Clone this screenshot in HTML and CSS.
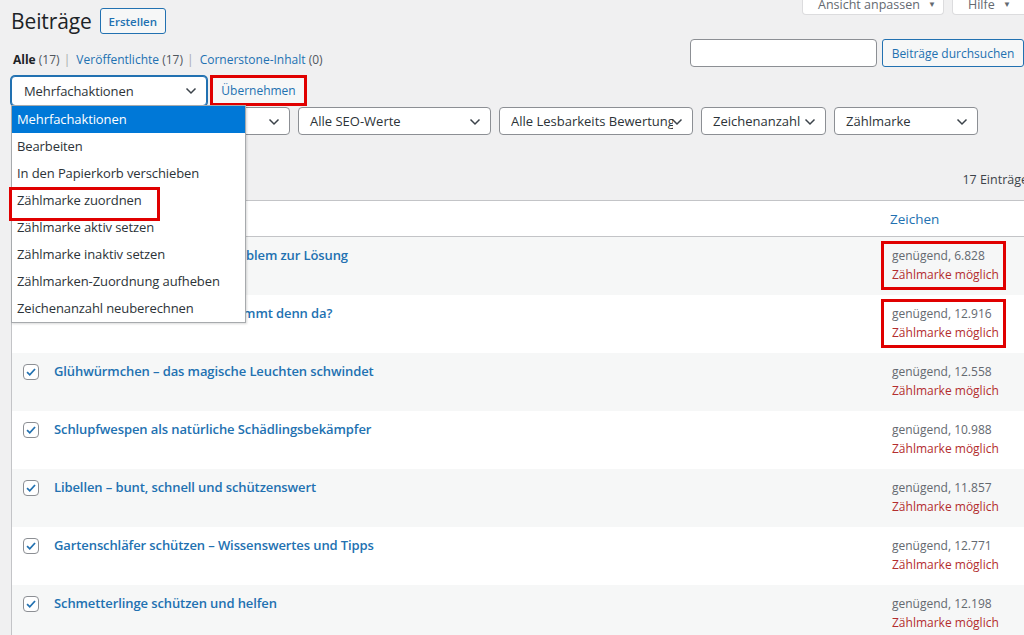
FILE: index.html
```html
<!DOCTYPE html>
<html lang="de">
<head>
<meta charset="utf-8">
<title>Beiträge</title>
<link rel="stylesheet" href="styles.css">
</head>
<body>
<div class="wrap">
  <div class="head-row">
    <div class="title-group">
      <h1 class="page-title">Beiträge</h1>
      <a class="btn btn-add">Erstellen</a>
    </div>
    <div class="meta-links">
      <span class="meta-btn meta-options">Ansicht anpassen <span class="tri">▼</span></span>
      <span class="meta-btn meta-help">Hilfe <span class="tri">▼</span></span>
    </div>
  </div>

  <div class="sub-row">
    <ul class="subsubsub">
      <li><b class="current">Alle</b> <span class="count">(17)</span> <span class="sep">|</span></li>
      <li><a>Veröffentlichte <span class="count-l">(17)</span></a> <span class="sep">|</span></li>
      <li><a>Cornerstone-Inhalt</a> <span class="count">(0)</span></li>
    </ul>
    <div class="search-box">
      <input class="search-input" type="text">
      <a class="btn btn-search">Beiträge durchsuchen</a>
    </div>
  </div>

  <div class="bulk-row">
    <div class="select select-bulk">Mehrfachaktionen
      <svg class="chev" viewBox="0 0 12 8"><path d="M1.5 1.5 L6 6 L10.5 1.5" fill="none" stroke="#3c434a" stroke-width="1.5"/></svg>
    </div>
    <span class="apply-wrap"><a class="btn btn-apply">Übernehmen</a></span>
  </div>

  <div class="filter-row">
    <div class="select f-cat">Alle Kategorien
      <svg class="chev" viewBox="0 0 12 8"><path d="M1.5 1.5 L6 6 L10.5 1.5" fill="none" stroke="#3c434a" stroke-width="1.5"/></svg>
    </div>
    <div class="select f-seo">Alle SEO-Werte
      <svg class="chev" viewBox="0 0 12 8"><path d="M1.5 1.5 L6 6 L10.5 1.5" fill="none" stroke="#3c434a" stroke-width="1.5"/></svg>
    </div>
    <div class="select f-read"><span class="clip">Alle Lesbarkeits Bewertungen</span>
      <svg class="chev" viewBox="0 0 12 8"><path d="M1.5 1.5 L6 6 L10.5 1.5" fill="none" stroke="#3c434a" stroke-width="1.5"/></svg>
    </div>
    <div class="select f-chars">Zeichenanzahl
      <svg class="chev" viewBox="0 0 12 8"><path d="M1.5 1.5 L6 6 L10.5 1.5" fill="none" stroke="#3c434a" stroke-width="1.5"/></svg>
    </div>
    <div class="select f-mark">Zählmarke
      <svg class="chev" viewBox="0 0 12 8"><path d="M1.5 1.5 L6 6 L10.5 1.5" fill="none" stroke="#3c434a" stroke-width="1.5"/></svg>
    </div>
  </div>

  <div class="nav-row">
    <span class="num-items">17 Einträge</span>
  </div>

  <div class="table">
    <div class="thead">
      <div class="c-cb"></div>
      <div class="c-title"></div>
      <div class="c-chars"><a>Zeichen</a></div>
    </div>
    <div class="row alt">
      <div class="c-cb"><span class="cb"><svg viewBox="0 0 16 16"><path d="M3.5 8.2 L6.6 11.2 L12.6 4.6" fill="none" stroke="#2271b1" stroke-width="2"/></svg></span></div>
      <div class="c-title"><a>Blattläuse im Garten – vom Problem zur Lösung</a></div>
      <div class="c-chars"><div class="vals boxed"><div class="v1">genügend, 6.828</div><div class="v2">Zählmarke möglich</div></div></div>
    </div>
    <div class="row">
      <div class="c-cb"><span class="cb"><svg viewBox="0 0 16 16"><path d="M3.5 8.2 L6.6 11.2 L12.6 4.6" fill="none" stroke="#2271b1" stroke-width="2"/></svg></span></div>
      <div class="c-title"><a>Wildbienen im Garten – wer summt denn da?</a></div>
      <div class="c-chars"><div class="vals boxed"><div class="v1">genügend, 12.916</div><div class="v2">Zählmarke möglich</div></div></div>
    </div>
    <div class="row alt">
      <div class="c-cb"><span class="cb"><svg viewBox="0 0 16 16"><path d="M3.5 8.2 L6.6 11.2 L12.6 4.6" fill="none" stroke="#2271b1" stroke-width="2"/></svg></span></div>
      <div class="c-title"><a>Glühwürmchen – das magische Leuchten schwindet</a></div>
      <div class="c-chars"><div class="vals"><div class="v1">genügend, 12.558</div><div class="v2">Zählmarke möglich</div></div></div>
    </div>
    <div class="row">
      <div class="c-cb"><span class="cb"><svg viewBox="0 0 16 16"><path d="M3.5 8.2 L6.6 11.2 L12.6 4.6" fill="none" stroke="#2271b1" stroke-width="2"/></svg></span></div>
      <div class="c-title"><a>Schlupfwespen als natürliche Schädlingsbekämpfer</a></div>
      <div class="c-chars"><div class="vals"><div class="v1">genügend, 10.988</div><div class="v2">Zählmarke möglich</div></div></div>
    </div>
    <div class="row alt">
      <div class="c-cb"><span class="cb"><svg viewBox="0 0 16 16"><path d="M3.5 8.2 L6.6 11.2 L12.6 4.6" fill="none" stroke="#2271b1" stroke-width="2"/></svg></span></div>
      <div class="c-title"><a>Libellen – bunt, schnell und schützenswert</a></div>
      <div class="c-chars"><div class="vals"><div class="v1">genügend, 11.857</div><div class="v2">Zählmarke möglich</div></div></div>
    </div>
    <div class="row">
      <div class="c-cb"><span class="cb"><svg viewBox="0 0 16 16"><path d="M3.5 8.2 L6.6 11.2 L12.6 4.6" fill="none" stroke="#2271b1" stroke-width="2"/></svg></span></div>
      <div class="c-title"><a>Gartenschläfer schützen – Wissenswertes und Tipps</a></div>
      <div class="c-chars"><div class="vals"><div class="v1">genügend, 12.771</div><div class="v2">Zählmarke möglich</div></div></div>
    </div>
    <div class="row alt">
      <div class="c-cb"><span class="cb"><svg viewBox="0 0 16 16"><path d="M3.5 8.2 L6.6 11.2 L12.6 4.6" fill="none" stroke="#2271b1" stroke-width="2"/></svg></span></div>
      <div class="c-title"><a>Schmetterlinge schützen und helfen</a></div>
      <div class="c-chars"><div class="vals"><div class="v1">genügend, 12.198</div><div class="v2">Zählmarke möglich</div></div></div>
    </div>
  </div>

  <ul class="dropdown">
    <li class="sel">Mehrfachaktionen</li>
    <li>Bearbeiten</li>
    <li>In den Papierkorb verschieben</li>
    <li class="marked">Zählmarke zuordnen</li>
    <li>Zählmarke aktiv setzen</li>
    <li>Zählmarke inaktiv setzen</li>
    <li>Zählmarken-Zuordnung aufheben</li>
    <li>Zeichenanzahl neuberechnen</li>
  </ul>
</div>
</body>
</html>
```

FILE: styles.css
```css
* { box-sizing: border-box; }
html, body { margin: 0; padding: 0; }
body {
  background: #f0f0f1;
  font-family: "Open Sans", "Noto Sans", sans-serif;
  font-size: 13px;
  color: #3c434a;
  overflow: hidden;
  width: 1024px;
  height: 635px;
}
a { color: #2271b1; text-decoration: none; }
ul { list-style: none; margin: 0; padding: 0; }

.wrap {
  position: relative;
  margin-left: 11px;
  width: 1013px;
}

/* header */
.head-row {
  display: flex;
  justify-content: space-between;
  align-items: flex-start;
  height: 36px;
}
.title-group { display: flex; align-items: center; gap: 8px; padding-top: 8px; }
.page-title {
  margin: 0;
  font-size: 21px;
  font-weight: 400;
  color: #1d2327;
  line-height: 26px;
  letter-spacing: -0.1px;
}
.btn {
  display: inline-flex;
  align-items: center;
  border: 1px solid #2271b1;
  border-radius: 3px;
  background: #f6f7f7;
  color: #2271b1;
  white-space: nowrap;
}
.btn-add {
  height: 26px;
  width: 66px;
  justify-content: center;
  font-size: 11.5px;
  font-weight: 600;
}
.meta-links { display: flex; gap: 8px; margin-top: -11px; margin-right: -40px; }
.meta-btn {
  display: inline-block;
  height: 26px;
  line-height: 30px;
  background: #fff;
  border: 1px solid #dcdcde;
  border-top: 0;
  border-radius: 0 0 4px 4px;
  color: #646970;
  font-size: 12.5px;
  padding: 0 0 0 15px;
  white-space: nowrap;
}
.meta-options { width: 142px; }
.meta-help { width: 112px; }
.tri { font-size: 8px; margin-left: 5px; vertical-align: 2px; }

/* sub row */
.sub-row {
  display: flex;
  justify-content: space-between;
  align-items: flex-start;
  height: 39px;
  padding-top: 3px;
}
.subsubsub {
  display: flex;
  gap: 5px;
  font-size: 12px;
  padding-top: 12px;
  color: #646970;
  padding-left: 2px;
}
.subsubsub .current { color: #1d2327; font-weight: 700; }
.count, .count-l { color: #50575e; }
.sep { color: #a7aaad; margin: 0 1px; }
.search-box { display: flex; gap: 5px; }
.search-input {
  width: 187px;
  height: 28px;
  border: 1px solid #8c8f94;
  border-radius: 4px;
  background: #fff;
  margin: 0;
}
.btn-search {
  height: 28px;
  font-size: 12px;
  width: 142px;
  justify-content: center;
}

/* bulk row */
.bulk-row {
  display: flex;
  align-items: center;
  gap: 3px;
  height: 31px;
}
.select {
  position: relative;
  display: flex;
  align-items: center;
  height: 28px;
  background: #fff;
  border: 1px solid #8c8f94;
  border-radius: 4px;
  padding: 0 24px 0 11px;
  font-size: 13px;
  color: #2c3338;
  white-space: nowrap;
  overflow: hidden;
}
.chev {
  position: absolute;
  right: 9px;
  top: 10px;
  width: 12px;
  height: 8px;
}
.select-bulk {
  width: 196px;
  height: 30px;
  border-color: #2271b1;
  box-shadow: 0 0 0 1px #2271b1;
  padding-left: 12px;
  font-size: 13px;
  letter-spacing: -0.1px;
}
.apply-wrap {
  display: inline-block;
  border: 3px solid #e00000;
  padding: 0;
}
.btn-apply {
  height: 25px;
  width: 91px;
  justify-content: center;
  border: 0;
  font-size: 12px;
}

/* filters */
.filter-row {
  display: flex;
  gap: 8px;
  padding-top: 1px;
}
.f-cat { width: 279px; }
.f-seo { width: 193px; }
.f-read { width: 194px; padding-right: 2px; }
.f-read .clip { display: block; width: 162px; overflow: hidden; }
.f-chars { width: 125px; }
.f-mark { width: 144px; }

.nav-row {
  display: flex;
  justify-content: flex-end;
  height: 65px;
  padding-top: 36px;
  font-size: 12.5px;
  color: #3c434a;
  margin-right: -4px;
}

/* table */
.table {
  width: 1040px;
  background: #fff;
  border: 1px solid #c3c4c7;
  border-right: 0;
}
.thead, .row {
  display: flex;
}
.thead {
  height: 36px;
  border-bottom: 1px solid #c3c4c7;
  align-items: center;
}
.c-cb { width: 42px; flex: none; padding-left: 11px; }
.c-title { flex: none; width: 836px; }
.c-chars { flex: 1; font-size: 13px; }
.thead .c-chars { font-size: 13.5px; padding-top: 0; }
.row { height: 58px; }
.row.alt { background: #f6f7f7; }
.row .c-cb { padding-top: 11px; }
.cb {
  display: block;
  width: 16px;
  height: 16px;
  background: #fff;
  border: 1px solid #8c8f94;
  border-radius: 4px;
}
.cb svg { display: block; width: 14px; height: 14px; }
.row .c-title { padding-top: 9px; font-size: 13px; font-weight: 600; letter-spacing: -0.1px; }
.row .c-title a { color: #2271b1; }
.vals {
  position: relative;
  display: inline-block;
  margin-top: 9px;
  margin-left: 2px;
  line-height: 19px;
  font-size: 12px;
}
.v1 { color: #646970; }
.v2 { color: #b32d2e; }
.boxed::after {
  content: "";
  position: absolute;
  left: -11px;
  right: -7px;
  top: -5px;
  bottom: -6px;
  border: 3px solid #e00000;
}

/* dropdown overlay */
.dropdown {
  position: absolute;
  left: 0;
  top: 105px;
  width: 235px;
  background: #fff;
  border: 1px solid #a7aaad;
  box-shadow: 1px 1px 2px rgba(0,0,0,0.15);
  z-index: 5;
  font-size: 13px;
  letter-spacing: -0.1px;
  color: #2c3338;
}
.dropdown li {
  position: relative;
  height: 27px;
  line-height: 27px;
  padding-left: 5px;
  white-space: nowrap;
}
.dropdown li.sel { background: #0078d7; color: #fff; }
.dropdown li.marked::after {
  content: "";
  position: absolute;
  left: -3px;
  top: 0;
  width: 145px;
  height: 28px;
  border: 3px solid #e00000;
}
```
